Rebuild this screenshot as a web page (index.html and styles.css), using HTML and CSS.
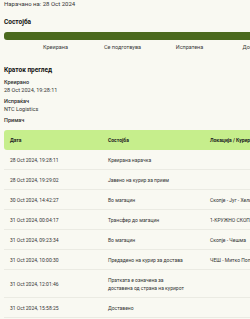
FILE: index.html
```html
<!DOCTYPE html>
<html lang="mk">
<head>
    <meta charset="UTF-8">
    <meta name="viewport" content="width=device-width, initial-scale=1.0">
    <title>Следење на пратка</title>
    <link rel="stylesheet" href="styles.css">
</head>
<body>

    <p class="ordered">Нарачано на: 28 Oct 2024</p>

    <!-- статус -->
    <h2 class="title status-title">Состојба</h2>
    <div class="bar"></div>
    <div class="steps">
        <span>Креирана</span>
        <span>Се подготвува</span>
        <span>Испратена</span>
        <span>Доставена</span>
    </div>

    <!-- преглед -->
    <h2 class="title">Краток преглед</h2>
    <div class="info">
        <div class="info-label">Креирано</div>
        <div class="info-value">28 Oct 2024, 19:28:11</div>
        <div class="info-label">Испраќач</div>
        <div class="info-value">NTC Logistics</div>
        <div class="info-label">Примач</div>
    </div>

    <!-- историја -->
    <table class="history">
        <thead>
            <tr>
                <th class="col-date">Дата</th>
                <th class="col-status">Состојба</th>
                <th>Локација / Курир</th>
            </tr>
        </thead>
        <tbody>
            <tr><td>28 Oct 2024, 19:28:11</td><td>Креирана нарачка</td><td></td></tr>
            <tr><td>28 Oct 2024, 19:29:02</td><td>Јавено на курир за прием</td><td></td></tr>
            <tr><td>30 Oct 2024, 14:42:27</td><td>Во магацин</td><td>Скопје - Југ - Хеликопт</td></tr>
            <tr><td>31 Oct 2024, 00:04:17</td><td>Трансфер до магацин</td><td>1-КРУЖНО СКОПЈЕ</td></tr>
            <tr><td>31 Oct 2024, 09:23:34</td><td>Во магацин</td><td>Скопје - Чешма</td></tr>
            <tr><td>31 Oct 2024, 10:00:30</td><td>Предадено на курир за достава</td><td>ЧЕШ - Митко Попов</td></tr>
            <tr><td>31 Oct 2024, 12:01:46</td><td>Пратката е означена за<br>доставена од страна на курирот</td><td></td></tr>
            <tr><td>31 Oct 2024, 15:58:25</td><td>Доставено</td><td></td></tr>
        </tbody>
    </table>

</body>
</html>
```

FILE: styles.css
```css
html {
    overflow: hidden;
}
body {
    margin: 0;
    padding: 0 4px;
    width: 400px;
    font-family: Roboto, "Noto Sans", sans-serif;
    background-color: #f9f9f2;
    color: #2b2b2b;
}
.ordered {
    margin: 0;
    font-size: 6px;
    line-height: 8px;
    color: #333;
}
.title {
    margin: 0;
    font-size: 6.5px;
    line-height: 9px;
    font-weight: bold;
    color: #111;
}
.status-title {
    margin-top: 10px;
}
.bar {
    margin-top: 5px;
    height: 8px;
    width: 330px;
    background-color: #4b6a1e;
    border-radius: 3px;
}
.steps {
    display: flex;
    padding-left: 18px;
    margin-top: 3px;
    margin-bottom: 15px;
}
.steps span {
    width: 67px;
    text-align: center;
    font-size: 5.5px;
    line-height: 8px;
    color: #3a3a3a;
}
.info {
    margin-top: 3px;
}
.info-label {
    font-size: 5.5px;
    line-height: 8px;
    font-weight: 500;
    color: #2b2b2b;
    margin-top: 3px;
}
.info-value {
    font-size: 5.5px;
    line-height: 8px;
    color: #333;
}
.history {
    margin-top: 6px;
    width: 330px;
    border-collapse: collapse;
    font-size: 5px;
}
.history th {
    background-color: #c6ee8c;
    text-align: left;
    font-weight: bold;
    padding: 6px 6px;
    line-height: 8px;
    color: #222;
}
.history th:first-child {
    border-top-left-radius: 3px;
    border-bottom-left-radius: 3px;
}
.history td {
    padding: 6px 6px 5px;
    line-height: 8px;
    border-bottom: 1px solid #ebebe3;
    color: #333;
    vertical-align: middle;
}
.col-date {
    width: 86px;
}
.col-status {
    width: 90px;
}
```
